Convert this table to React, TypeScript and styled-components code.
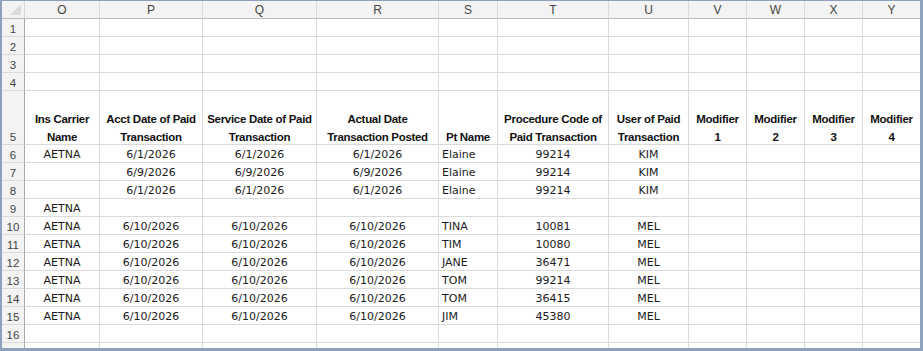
import React from 'react';
import styled, { createGlobalStyle } from 'styled-components';

const GlobalStyle = createGlobalStyle`
	html, body {
		margin: 0;
		padding: 0;
		background: #ffffff;
	}
`;

type Align = 'left' | 'center';

interface iColumn {
	letter: string;
	width: number;
	align: Align;
}

const columns: iColumn[] = [
	{ letter: 'O', width: 75, align: 'center' },
	{ letter: 'P', width: 103, align: 'center' },
	{ letter: 'Q', width: 114, align: 'center' },
	{ letter: 'R', width: 122, align: 'center' },
	{ letter: 'S', width: 59, align: 'left' },
	{ letter: 'T', width: 111, align: 'center' },
	{ letter: 'U', width: 80, align: 'center' },
	{ letter: 'V', width: 58, align: 'center' },
	{ letter: 'W', width: 58, align: 'center' },
	{ letter: 'X', width: 58, align: 'center' },
	{ letter: 'Y', width: 58, align: 'center' },
];

const headings = [
	['Ins Carrier', 'Name'],
	['Acct Date of Paid', 'Transaction'],
	['Service Date of Paid', 'Transaction'],
	['Actual Date', 'Transaction Posted'],
	['Pt Name'],
	['Procedure Code of', 'Paid Transaction'],
	['User of Paid', 'Transaction'],
	['Modifier', '1'],
	['Modifier', '2'],
	['Modifier', '3'],
	['Modifier', '4'],
];

const paid = (pt: string, code: string) => [
	'AETNA',
	'6/10/2026',
	'6/10/2026',
	'6/10/2026',
	pt,
	code,
	'MEL',
];

// rows 6 through 17
const rows: string[][] = [
	['AETNA', '6/1/2026', '6/1/2026', '6/1/2026', 'Elaine', '99214', 'KIM'],
	['', '6/9/2026', '6/9/2026', '6/9/2026', 'Elaine', '99214', 'KIM'],
	['', '6/1/2026', '6/1/2026', '6/1/2026', 'Elaine', '99214', 'KIM'],
	['AETNA'],
	paid('TINA', '10081'),
	paid('TIM', '10080'),
	paid('JANE', '36471'),
	paid('TOM', '99214'),
	paid('TOM', '36415'),
	paid('JIM', '45380'),
	[],
	[],
];

const Frame = styled.div`
	width: 923px;
	height: 351px;
	box-sizing: border-box;
	border-style: solid;
	border-color: #8ea2bf;
	border-width: 1px 3px 3px 2px;
	overflow: hidden;
	background: #ffffff;
`;

const Sheet = styled.div<{ $template: string }>`
	display: grid;
	grid-template-columns: ${(p) => p.$template};
	grid-auto-rows: 18px;
`;

const Corner = styled.div`
	height: 17px;
	background: #f3f3f3;
	border-right: 1px solid #d5d5d5;
	border-bottom: 1px solid #bababa;
	position: relative;

	&::after {
		content: '';
		position: absolute;
		right: 3px;
		bottom: 3px;
		width: 0;
		height: 0;
		border-left: 11px solid transparent;
		border-bottom: 11px solid #dcdcdc;
	}
`;

const ColHead = styled.div`
	height: 17px;
	background: #f3f3f3;
	border-right: 1px solid #dadada;
	border-bottom: 1px solid #bababa;
	display: flex;
	align-items: center;
	justify-content: center;
	font-family: 'Liberation Sans', Arial, sans-serif;
	font-size: 12px;
	color: #444444;
`;

const RowHead = styled.div<{ $tall?: boolean }>`
	grid-row: ${(p) => (p.$tall ? 'span 3' : 'auto')};
	background: #f3f3f3;
	border-right: 1px solid #a8a8a8;
	border-bottom: 1px solid #dadada;
	display: flex;
	align-items: flex-end;
	justify-content: center;
	font-family: 'Liberation Sans', Arial, sans-serif;
	font-size: 11.5px;
	line-height: 14px;
	color: #444444;
`;

const Cell = styled.div<{ $align: Align; $tall?: boolean }>`
	grid-row: ${(p) => (p.$tall ? 'span 3' : 'auto')};
	border-right: 1px solid #dadada;
	border-bottom: 1px solid #dadada;
	display: flex;
	align-items: flex-end;
	justify-content: ${(p) => (p.$align === 'left' ? 'flex-start' : 'center')};
	padding-left: ${(p) => (p.$align === 'left' ? '3px' : '0')};
	font-family: 'DejaVu Sans', Tahoma, sans-serif;
	font-size: 11px;
	line-height: 14px;
	color: #1b1b1b;
	white-space: nowrap;
	overflow: hidden;
`;

const Heading = styled.div`
	margin-bottom: -2px;
	text-align: center;
	font-family: 'Liberation Sans', Arial, sans-serif;
	font-weight: 700;
	font-size: 11.5px;
	letter-spacing: -0.3px;
	line-height: 18px;
	color: #111111;
`;

const App = () => {
	const template = ['23px', ...columns.map((c) => `${c.width}px`)].join(' ');

	return (
		<>
			<GlobalStyle />
			<Frame>
				<Sheet $template={template}>
					<Corner />
					{columns.map((c) => (
						<ColHead key={c.letter}>{c.letter}</ColHead>
					))}

					{[1, 2, 3, 4].map((n) => (
						<React.Fragment key={n}>
							<RowHead>{n}</RowHead>
							{columns.map((c) => (
								<Cell key={c.letter} $align={c.align} />
							))}
						</React.Fragment>
					))}

					<RowHead $tall>5</RowHead>
					{columns.map((c, i) => (
						<Cell key={c.letter} $align="center" $tall>
							<Heading>
								{headings[i].map((line) => (
									<div key={line}>{line}</div>
								))}
							</Heading>
						</Cell>
					))}

					{rows.map((row, r) => (
						<React.Fragment key={r}>
							<RowHead>{r + 6}</RowHead>
							{columns.map((c, i) => (
								<Cell key={c.letter} $align={c.align}>
									{row[i] ?? ''}
								</Cell>
							))}
						</React.Fragment>
					))}
				</Sheet>
			</Frame>
		</>
	);
};

export default App;
